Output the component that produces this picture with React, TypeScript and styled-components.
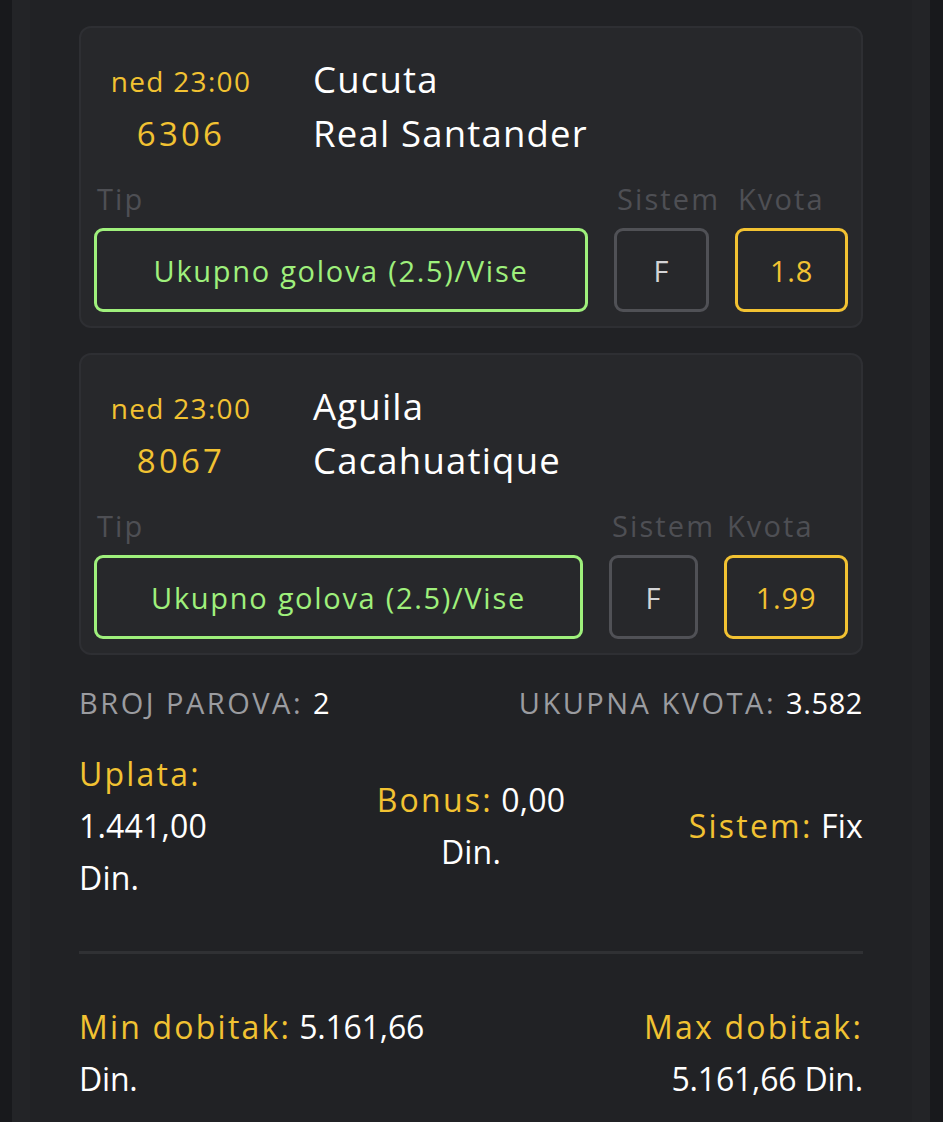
import styled, { createGlobalStyle } from "styled-components";

const GlobalStyle = createGlobalStyle`
  html, body {
    margin: 0;
    padding: 0;
    background: #18191c;
  }
  body {
    font-family: "Open Sans", "Noto Sans", sans-serif;
  }
`;

const YELLOW = "#f2c232";
const GREEN = "#9ff07c";

interface Bet {
  time: string;
  code: string;
  home: string;
  away: string;
  tip: string;
  system: string;
  odd: string;
  systemWidth: number;
  oddWidth: number;
}

const bets: Bet[] = [
  {
    time: "ned 23:00",
    code: "6306",
    home: "Cucuta",
    away: "Real Santander",
    tip: "Ukupno golova (2.5)/Vise",
    system: "F",
    odd: "1.8",
    systemWidth: 95,
    oddWidth: 113,
  },
  {
    time: "ned 23:00",
    code: "8067",
    home: "Aguila",
    away: "Cacahuatique",
    tip: "Ukupno golova (2.5)/Vise",
    system: "F",
    odd: "1.99",
    systemWidth: 89,
    oddWidth: 124,
  },
];

const Frame = styled.div`
  width: 918px;
  height: 1122px;
  margin-left: 12px;
  padding: 0 18px;
  box-sizing: border-box;
  background: #232427;
  overflow: hidden;
`;

const Panel = styled.div`
  height: 100%;
  background: #212225;
  padding: 26px 49px 0;
  box-sizing: border-box;
  display: flex;
  flex-direction: column;
`;

const Card = styled.div`
  background: #27282b;
  border: 2px solid #2e2f33;
  border-radius: 12px;
  padding: 24px 13px 14px;
  & + & {
    margin-top: 25px;
  }
`;

const MatchInfo = styled.div`
  display: grid;
  grid-template-columns: 174px 1fr;
  column-gap: 45px;
  grid-auto-rows: 54px;
  align-items: center;
`;

const Time = styled.div`
  color: ${YELLOW};
  font-size: 28px;
  text-align: center;
  letter-spacing: 1.3px;
  padding-top: 4px;
`;

const Code = styled.div`
  color: ${YELLOW};
  font-size: 33px;
  text-align: center;
  letter-spacing: 3.2px;
`;

const Team = styled.div`
  color: #ffffff;
  font-size: 36.5px;
  letter-spacing: 1.2px;
  white-space: nowrap;
`;

const PickRow = styled.div`
  display: flex;
  gap: 26px;
  margin-top: 22px;
`;

const PickColumn = styled.div<{ $width?: number }>`
  display: flex;
  flex-direction: column;
  flex: ${(p) => (p.$width ? `0 0 ${p.$width}px` : "1 1 auto")};
  min-width: 0;
`;

const Label = styled.div`
  color: #4e4f54;
  font-size: 29px;
  line-height: 34px;
  padding-left: 3px;
  white-space: nowrap;
  letter-spacing: 2.1px;
`;

const PickBox = styled.div<{ $tone: "green" | "gray" | "yellow" }>`
  margin-top: 12px;
  height: 84px;
  box-sizing: border-box;
  border: 3px solid
    ${(p) => (p.$tone === "green" ? GREEN : p.$tone === "yellow" ? YELLOW : "#505156")};
  border-radius: 9px;
  display: flex;
  align-items: center;
  justify-content: center;
  font-size: 29px;
  letter-spacing: ${(p) => (p.$tone === "green" ? "1.7px" : "0.8px")};
  white-space: nowrap;
  color: ${(p) => (p.$tone === "green" ? GREEN : p.$tone === "yellow" ? YELLOW : "#d4d4d6")};
`;

const Totals = styled.div`
  display: flex;
  justify-content: space-between;
  margin-top: 28px;
  font-size: 29px;
  line-height: 40px;
  letter-spacing: 2.5px;
  color: #9b9ca0;
`;

const Value = styled.span`
  color: #ffffff;
  letter-spacing: 0.6px;
`;

const Key = styled.span`
  color: ${YELLOW};
  letter-spacing: 2.2px;
`;

const StakeRow = styled.div`
  display: grid;
  grid-template-columns: 1fr auto 1fr;
  align-items: center;
  margin-top: 25px;
  font-size: 32px;
  line-height: 52px;
  color: #ffffff;
  letter-spacing: 0.2px;
`;

const StakeCell = styled.div<{ $align: "left" | "center" | "right" }>`
  text-align: ${(p) => p.$align};
  justify-self: ${(p) => (p.$align === "left" ? "start" : p.$align === "right" ? "end" : "center")};
`;

const Line = styled.div`
  white-space: nowrap;
`;

const Divider = styled.hr`
  border: none;
  height: 3px;
  background: #303134;
  margin: 47px 0 0;
`;

const WinRow = styled.div`
  display: flex;
  justify-content: space-between;
  margin-top: 47px;
  font-size: 32px;
  line-height: 52px;
  color: #ffffff;
  letter-spacing: -0.2px;
`;

const WinCell = styled.div<{ $align: "left" | "right" }>`
  text-align: ${(p) => p.$align};
`;

const BetCard = ({ bet }: { bet: Bet }) => (
  <Card>
    <MatchInfo>
      <Time>{bet.time}</Time>
      <Team>{bet.home}</Team>
      <Code>{bet.code}</Code>
      <Team>{bet.away}</Team>
    </MatchInfo>
    <PickRow>
      <PickColumn>
        <Label>Tip</Label>
        <PickBox $tone="green">{bet.tip}</PickBox>
      </PickColumn>
      <PickColumn $width={bet.systemWidth}>
        <Label>Sistem</Label>
        <PickBox $tone="gray">{bet.system}</PickBox>
      </PickColumn>
      <PickColumn $width={bet.oddWidth}>
        <Label>Kvota</Label>
        <PickBox $tone="yellow">{bet.odd}</PickBox>
      </PickColumn>
    </PickRow>
  </Card>
);

export default function App() {
  return (
    <>
      <GlobalStyle />
      <Frame>
        <Panel>
          {bets.map((bet) => (
            <BetCard key={bet.code} bet={bet} />
          ))}
          <Totals>
            <div>
              BROJ PAROVA: <Value>2</Value>
            </div>
            <div>
              UKUPNA KVOTA: <Value>3.582</Value>
            </div>
          </Totals>
          <StakeRow>
            <StakeCell $align="left">
              <Line>
                <Key>Uplata:</Key>
              </Line>
              <Line>1.441,00</Line>
              <Line>Din.</Line>
            </StakeCell>
            <StakeCell $align="center">
              <Line>
                <Key>Bonus:</Key> 0,00
              </Line>
              <Line>Din.</Line>
            </StakeCell>
            <StakeCell $align="right">
              <Line>
                <Key>Sistem:</Key> Fix
              </Line>
            </StakeCell>
          </StakeRow>
          <Divider />
          <WinRow>
            <WinCell $align="left">
              <Line>
                <Key>Min dobitak:</Key> 5.161,66
              </Line>
              <Line>Din.</Line>
            </WinCell>
            <WinCell $align="right">
              <Line>
                <Key>Max dobitak:</Key>
              </Line>
              <Line>5.161,66 Din.</Line>
            </WinCell>
          </WinRow>
        </Panel>
      </Frame>
    </>
  );
}
